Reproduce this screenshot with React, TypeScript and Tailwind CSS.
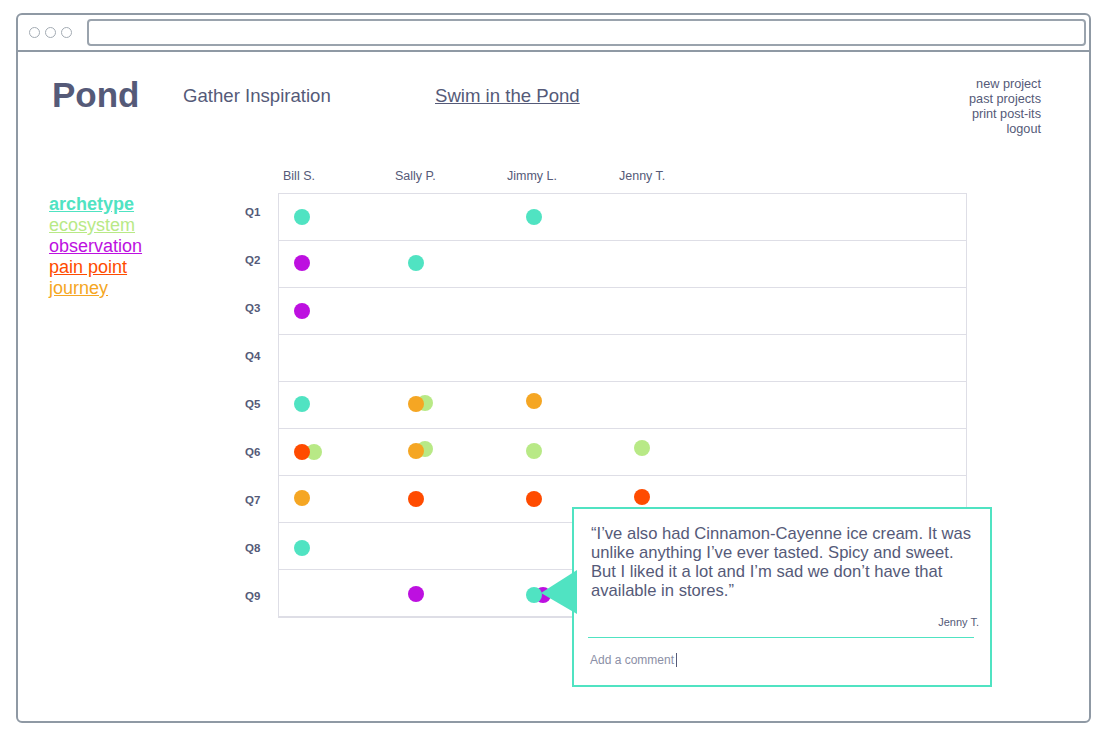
type Dot = { c: string; y?: string; top?: boolean; overlap?: string };

const ink = "text-[#555a78]";

const people = ["Bill S.", "Sally P.", "Jimmy L.", "Jenny T."];
const cellWidths = ["w-[114px]", "w-[118px]", "w-[108px]", "w-[108px]"];

const TEAL = "bg-[#50e3c2]";
const GREEN = "bg-[#b8e986]";
const PURPLE = "bg-[#bd10e0]";
const RED = "bg-[#ff4b00]";
const ORANGE = "bg-[#f5a623]";

// one entry per question, one list of dots per person
const rows: Dot[][][] = [
  [[{ c: TEAL }], [], [{ c: TEAL }], []],
  [[{ c: PURPLE, y: "-translate-y-[1px]" }], [{ c: TEAL, y: "-translate-y-[1px]" }], [], []],
  [[{ c: PURPLE }], [], [], []],
  [[], [], [], []],
  [
    [{ c: TEAL, y: "-translate-y-[1px]" }],
    [{ c: ORANGE, y: "-translate-y-[1px]", top: true }, { c: GREEN, y: "-translate-y-[2px]", overlap: "-ml-[7px]" }],
    [{ c: ORANGE, y: "-translate-y-[4px]" }],
    [],
  ],
  [
    [{ c: RED, top: true }, { c: GREEN, overlap: "-ml-[4px]" }],
    [{ c: ORANGE, y: "-translate-y-[1px]", top: true }, { c: GREEN, y: "-translate-y-[3px]", overlap: "-ml-[7px]" }],
    [{ c: GREEN, y: "-translate-y-[1px]" }],
    [{ c: GREEN, y: "-translate-y-[4px]" }],
  ],
  [
    [{ c: ORANGE, y: "-translate-y-[1px]" }],
    [{ c: RED }],
    [{ c: RED }],
    [{ c: RED, y: "-translate-y-[2px]" }],
  ],
  [[{ c: TEAL, y: "translate-y-[2px]" }], [], [], []],
  [
    [],
    [{ c: PURPLE, y: "translate-y-[1px]" }],
    [{ c: TEAL, y: "translate-y-[2px]", top: true }, { c: PURPLE, y: "translate-y-[2px]", overlap: "-ml-[7px]" }],
    [],
  ],
];

const legend = [
  { label: "archetype", cls: "text-[#50e3c2] font-bold" },
  { label: "ecosystem", cls: "text-[#b8e986]" },
  { label: "observation", cls: "text-[#bd10e0]" },
  { label: "pain point", cls: "text-[#ff4b00]" },
  { label: "journey", cls: "text-[#f5a623]" },
];

function CommentPopup() {
  return (
    <div className="absolute left-[293px] top-[313px] z-20 w-[420px] h-[180px] bg-white border-2 border-[#50e3c2] flex flex-col">
      <svg className="absolute left-[-33px] top-[61px]" width="36" height="44" viewBox="0 0 36 44">
        <polygon points="0,23 36,0 36,44" fill="#50e3c2" />
      </svg>
      <p className={`pl-[17px] pt-[15px] text-[16.6px] leading-[19px] ${ink}`}>
        “I’ve also had Cinnamon-Cayenne ice cream. It was
        <br />
        unlike anything I’ve ever tasted. Spicy and sweet.
        <br />
        But I liked it a lot and I’m sad we don’t have that
        <br />
        available in stores.”
      </p>
      <div className={`mt-[15px] pr-[11px] text-right text-[11px] leading-[14px] ${ink}`}>Jenny T.</div>
      <div className="mt-[8px] ml-[14px] mr-[16px] border-t border-[#50e3c2]" />
      <div className="mt-[14px] pl-[16px] flex items-center text-[12px] leading-[16px] text-[#8b8fa6]">
        Add a comment
        <span className="ml-[2px] w-px h-[14px] bg-[#555a78]" />
      </div>
    </div>
  );
}

export default function App() {
  return (
    <div className="w-[1105px] h-[744px] bg-white pt-[13px] pl-[16px] font-['Liberation_Sans',Arial,sans-serif]">
      <div className="w-[1075px] h-[710px] border-2 border-[#8f99a4] rounded-[6px] flex flex-col">
        {/* browser chrome */}
        <div className="h-[37px] border-b-2 border-[#8f99a4] flex items-center pl-[11px] pr-[3px]">
          <div className="flex gap-[5px]">
            <span className="w-[11px] h-[11px] rounded-full border-[1.5px] border-[#a3abb3]" />
            <span className="w-[11px] h-[11px] rounded-full border-[1.5px] border-[#a3abb3]" />
            <span className="w-[11px] h-[11px] rounded-full border-[1.5px] border-[#a3abb3]" />
          </div>
          <div className="ml-[15px] flex-1 h-[27px] rounded-[4px] border-2 border-[#9aa3ad]" />
        </div>

        {/* top bar */}
        <div className="flex items-start pt-[25px] pl-[34px] pr-[48px]">
          <div className={`w-[131px] text-[35px] leading-[36px] font-bold ${ink}`}>Pond</div>
          <div className={`w-[252px] mt-[8px] text-[18.6px] leading-[22px] ${ink}`}>Gather Inspiration</div>
          <a className={`mt-[8px] text-[18.6px] leading-[22px] underline ${ink}`}>Swim in the Pond</a>
          <div className={`ml-auto flex flex-col items-end text-[12.7px] leading-[15px] ${ink}`}>
            <span>new project</span>
            <span>past projects</span>
            <span>print post-its</span>
            <span>logout</span>
          </div>
        </div>

        {/* legend + chart */}
        <div className="flex items-start mt-[31px] pl-[31px]">
          <div className="w-[196px] mt-[26px] flex flex-col text-[18px] leading-[21px]">
            {legend.map((l) => (
              <a key={l.label} className={`underline ${l.cls}`}>
                {l.label}
              </a>
            ))}
          </div>

          <div className="flex flex-col">
            <div className={`flex pl-[38px] h-[25px] text-[12.5px] leading-[16px] ${ink}`}>
              {people.map((p) => (
                <div key={p} className="w-[112px]">
                  {p}
                </div>
              ))}
            </div>

            <div className="flex items-start">
              <div className={`w-[33px] -mt-[4px] flex flex-col text-[11.5px] font-bold ${ink}`}>
                {rows.map((_, i) => (
                  <div key={i} className="h-[48px] flex items-center">
                    Q{i + 1}
                  </div>
                ))}
              </div>

              <div className="relative w-[689px] border border-[#dedee6]">
                {rows.map((cells, i) => (
                  <div key={i} className="h-[47px] flex items-center pl-[15px] border-b border-[#dedee6] last:h-[46px] last:border-b-0">
                    {cells.map((dots, j) => (
                      <div key={j} className={`${cellWidths[j]} flex items-center`}>
                        {dots.map((d, k) => (
                          <span
                            key={k}
                            className={`w-4 h-4 rounded-full shrink-0 ${d.c} ${d.y ?? ""} ${d.overlap ?? ""} ${d.top ? "relative z-10" : ""}`}
                          />
                        ))}
                      </div>
                    ))}
                  </div>
                ))}
                <CommentPopup />
              </div>
            </div>
          </div>
        </div>
      </div>
    </div>
  );
}
